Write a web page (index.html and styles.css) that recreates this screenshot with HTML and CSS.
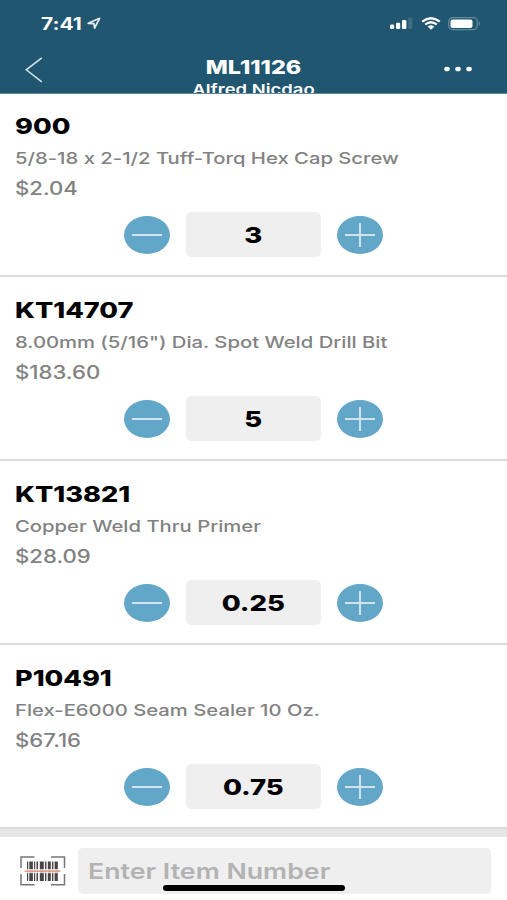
FILE: index.html
```html
<!DOCTYPE html>
<html>
<head>
    <title>ML11126</title>
    <meta name="viewport" content="width=device-width, initial-scale=1">
    <link rel="stylesheet" href="styles.css">
</head>
<body>
    <header class="header">
        <div class="status-bar">
            <div class="status-left">
                <span class="time wide">7:41</span>
                <svg class="location" width="15" height="13" viewBox="0 0 15 13">
                    <path d="M1.2 6.3 L12.6 1.3 L7.6 11 L7 6.6 Z" fill="none" stroke="#e4eef2" stroke-width="1.7" stroke-linejoin="round"/>
                </svg>
            </div>
            <div class="status-right">
                <svg width="23" height="13" viewBox="0 0 23 13">
                    <rect x="0" y="7.5" width="4.2" height="4.5" rx="1.3" fill="#fff"/>
                    <rect x="6" y="5.7" width="4.2" height="6.3" rx="1.3" fill="#fff"/>
                    <rect x="12" y="3" width="4.4" height="9" rx="1.3" fill="#fff"/>
                    <rect x="18.2" y="0.5" width="4.2" height="11.5" rx="1.3" fill="#3c6d82"/>
                </svg>
                <svg class="wifi" width="20" height="14" viewBox="0 0 20 14">
                    <path d="M1.2 4.6 Q10 -2 18.8 4.6" fill="none" stroke="#fff" stroke-width="2.3"/>
                    <path d="M4.2 7.5 Q10 3 15.8 7.5" fill="none" stroke="#fff" stroke-width="2.2"/>
                    <path d="M6.6 9.6 Q10 7 13.4 9.6 L10 12.8 Z" fill="#fff"/>
                </svg>
                <svg class="battery" width="33" height="14" viewBox="0 0 33 14">
                    <rect x="0.7" y="0.7" width="28.6" height="12" rx="4" fill="none" stroke="#64899a" stroke-width="1.3"/>
                    <rect x="2.5" y="2.5" width="22" height="8.5" rx="2" fill="#fff"/>
                    <path d="M30.8 4.5 Q33.6 6.7 30.8 9 Z" fill="#64899a"/>
                </svg>
            </div>
        </div>
        <div class="nav-bar">
            <svg class="back" width="18" height="26" viewBox="0 0 18 26">
                <path d="M16.8 0.8 L1.2 12.8 L16.8 24.8" fill="none" stroke="#d5e3e9" stroke-width="1.5"/>
            </svg>
            <div class="nav-title">
                <div class="order wide">ML11126</div>
                <div class="customer wide">Alfred Nicdao</div>
            </div>
            <svg class="more" width="28" height="6" viewBox="0 0 28 6">
                <ellipse cx="3" cy="3" rx="2.8" ry="2.3" fill="#fff"/>
                <ellipse cx="14" cy="3" rx="2.8" ry="2.3" fill="#fff"/>
                <ellipse cx="25" cy="3" rx="2.8" ry="2.3" fill="#fff"/>
            </svg>
        </div>
    </header>

    <main class="items">
        <div class="item">
            <div class="sku"><span class="wide">900</span></div>
            <div class="desc"><span class="wide">5/8-18 x 2-1/2 Tuff-Torq Hex Cap Screw</span></div>
            <div class="price"><span class="wide">$2.04</span></div>
            <div class="qty-row">
                <div class="round-btn minus"></div>
                <div class="qty"><span class="wide">3</span></div>
                <div class="round-btn plus"></div>
            </div>
        </div>
        <div class="item">
            <div class="sku"><span class="wide">KT14707</span></div>
            <div class="desc"><span class="wide">8.00mm (5/16") Dia. Spot Weld Drill Bit</span></div>
            <div class="price"><span class="wide">$183.60</span></div>
            <div class="qty-row">
                <div class="round-btn minus"></div>
                <div class="qty"><span class="wide">5</span></div>
                <div class="round-btn plus"></div>
            </div>
        </div>
        <div class="item">
            <div class="sku"><span class="wide">KT13821</span></div>
            <div class="desc"><span class="wide">Copper Weld Thru Primer</span></div>
            <div class="price"><span class="wide">$28.09</span></div>
            <div class="qty-row">
                <div class="round-btn minus"></div>
                <div class="qty"><span class="wide">0.25</span></div>
                <div class="round-btn plus"></div>
            </div>
        </div>
        <div class="item">
            <div class="sku"><span class="wide">P10491</span></div>
            <div class="desc"><span class="wide">Flex-E6000 Seam Sealer 10 Oz.</span></div>
            <div class="price"><span class="wide">$67.16</span></div>
            <div class="qty-row">
                <div class="round-btn minus"></div>
                <div class="qty"><span class="wide">0.75</span></div>
                <div class="round-btn plus"></div>
            </div>
        </div>
    </main>

    <footer class="entry-bar">
        <svg class="barcode" width="46" height="30" viewBox="0 0 46 30">
            <path d="M1 12 V1 H14.5 M31 1 H44.5 V12 M44.5 18 V28.8 H31 M14.5 28.8 H1 V18" fill="none" stroke="#777" stroke-width="1.5"/>
            <g fill="#4b4444">
                <rect x="7" y="5.5" width="1.2" height="19.5"/>
                <rect x="9.3" y="5.5" width="3.6" height="19.5"/>
                <rect x="14" y="5.5" width="1.2" height="19.5"/>
                <rect x="16.5" y="5.5" width="1.5" height="19.5"/>
                <rect x="19.8" y="5.5" width="4" height="19.5"/>
                <rect x="25" y="5.5" width="1.4" height="19.5"/>
                <rect x="27.8" y="5.5" width="3" height="19.5"/>
                <rect x="32" y="5.5" width="1.4" height="19.5"/>
                <rect x="34.6" y="5.5" width="3.2" height="19.5"/>
            </g>
            <rect x="4.5" y="13" width="36" height="4.2" fill="#fff" opacity="0.75"/>
            <rect x="4.5" y="14.5" width="36" height="1.3" fill="#e58a73"/>
        </svg>
        <div class="entry"><span class="wide">Enter Item Number</span></div>
        <div class="home-indicator"></div>
    </footer>
</body>
</html>
```

FILE: styles.css
```css
* {
    box-sizing: border-box;
}

body {
    margin: 0;
    width: 507px;
    height: 900px;
    display: flex;
    flex-direction: column;
    overflow: hidden;
    font-family: Inter, "Liberation Sans", sans-serif;
    font-feature-settings: "calt" 0;
    background: white;
}

svg {
    display: block;
    flex: none;
}

/* extended lettering */
.wide {
    display: inline-block;
    white-space: nowrap;
    transform: scaleX(1.23);
    transform-origin: left center;
}

.header {
    flex: none;
    height: 94px;
    overflow: hidden;
    background-color: #20566f;
    border-bottom: 1px solid #5f8799;
    color: white;
}

.status-bar {
    display: flex;
    justify-content: space-between;
    height: 46px;
    padding: 13px 26px 0 41px;
}

.status-left, .status-right {
    display: flex;
    align-items: center;
    height: 21px;
}

.time {
    width: 46px;
    font-size: 17px;
    font-weight: 700;
}

.wifi {
    margin-left: 8px;
}

.battery {
    margin-left: 7px;
}

.nav-bar {
    display: grid;
    grid-template-columns: 60px 1fr 60px;
    height: 48px;
    padding: 0 10px 0 25px;
}

.back {
    margin-top: 11px;
}

.nav-title {
    padding: 11px 15px 0 0;
    text-align: center;
}

.nav-title .wide {
    display: block;
    transform-origin: center;
}

.order {
    font-size: 19px;
    line-height: 22px;
    font-weight: 800;
}

.customer {
    font-size: 15px;
    line-height: 21px;
    font-weight: 600;
}

.more {
    margin: 20px 0 0 7px;
}

.items {
    flex: none;
}

.item {
    height: 184px;
    padding: 20px 15px 0;
    border-bottom: 2px solid #dadada;
}

.item:first-child {
    height: 183px;
    padding-top: 19px;
}

.sku {
    height: 28px;
    line-height: 26px;
    font-size: 22px;
    font-weight: 800;
    color: black;
}

.desc {
    height: 31px;
    line-height: 34px;
    font-size: 16px;
    font-weight: 550;
    color: #828282;
}

.desc .wide {
    transform: scaleX(1.265);
}

.price {
    height: 40px;
    line-height: 34px;
    font-size: 18px;
    font-weight: 550;
    color: #828282;
}

.qty-row {
    display: flex;
    align-items: center;
    padding-left: 109px;
    gap: 16px;
}

.round-btn {
    width: 46px;
    height: 38px;
    border-radius: 50%;
    background-color: #62a6c8;
    display: grid;
    place-items: center;
}

.round-btn::before, .round-btn::after {
    content: "";
    grid-area: 1 / 1;
    background-color: #cfe4ee;
}

.round-btn::before {
    width: 30px;
    height: 2px;
}

.plus::after {
    width: 2px;
    height: 24px;
}

.qty {
    width: 135px;
    height: 45px;
    line-height: 46px;
    border-radius: 5px;
    background-color: #efefef;
    text-align: center;
    font-size: 22px;
    font-weight: 800;
}

.qty .wide {
    transform: scaleX(1.25);
    transform-origin: center;
}

.entry-bar {
    position: relative;
    flex: 1;
    display: flex;
    border-top: 8px solid #e6e6e6;
    padding: 11px 16px 0 20px;
}

.barcode {
    margin-top: 8px;
}

.entry {
    flex: 1;
    height: 46px;
    margin-left: 12px;
    padding-left: 10px;
    line-height: 46px;
    border-radius: 5px;
    background-color: #efefef;
    color: #b3b3b3;
    font-size: 22px;
    font-weight: 600;
}

.entry .wide {
    transform: scaleX(1.215);
}

.home-indicator {
    position: absolute;
    left: 163px;
    bottom: 9px;
    width: 182px;
    height: 6px;
    border-radius: 3px;
    background-color: black;
}
```
